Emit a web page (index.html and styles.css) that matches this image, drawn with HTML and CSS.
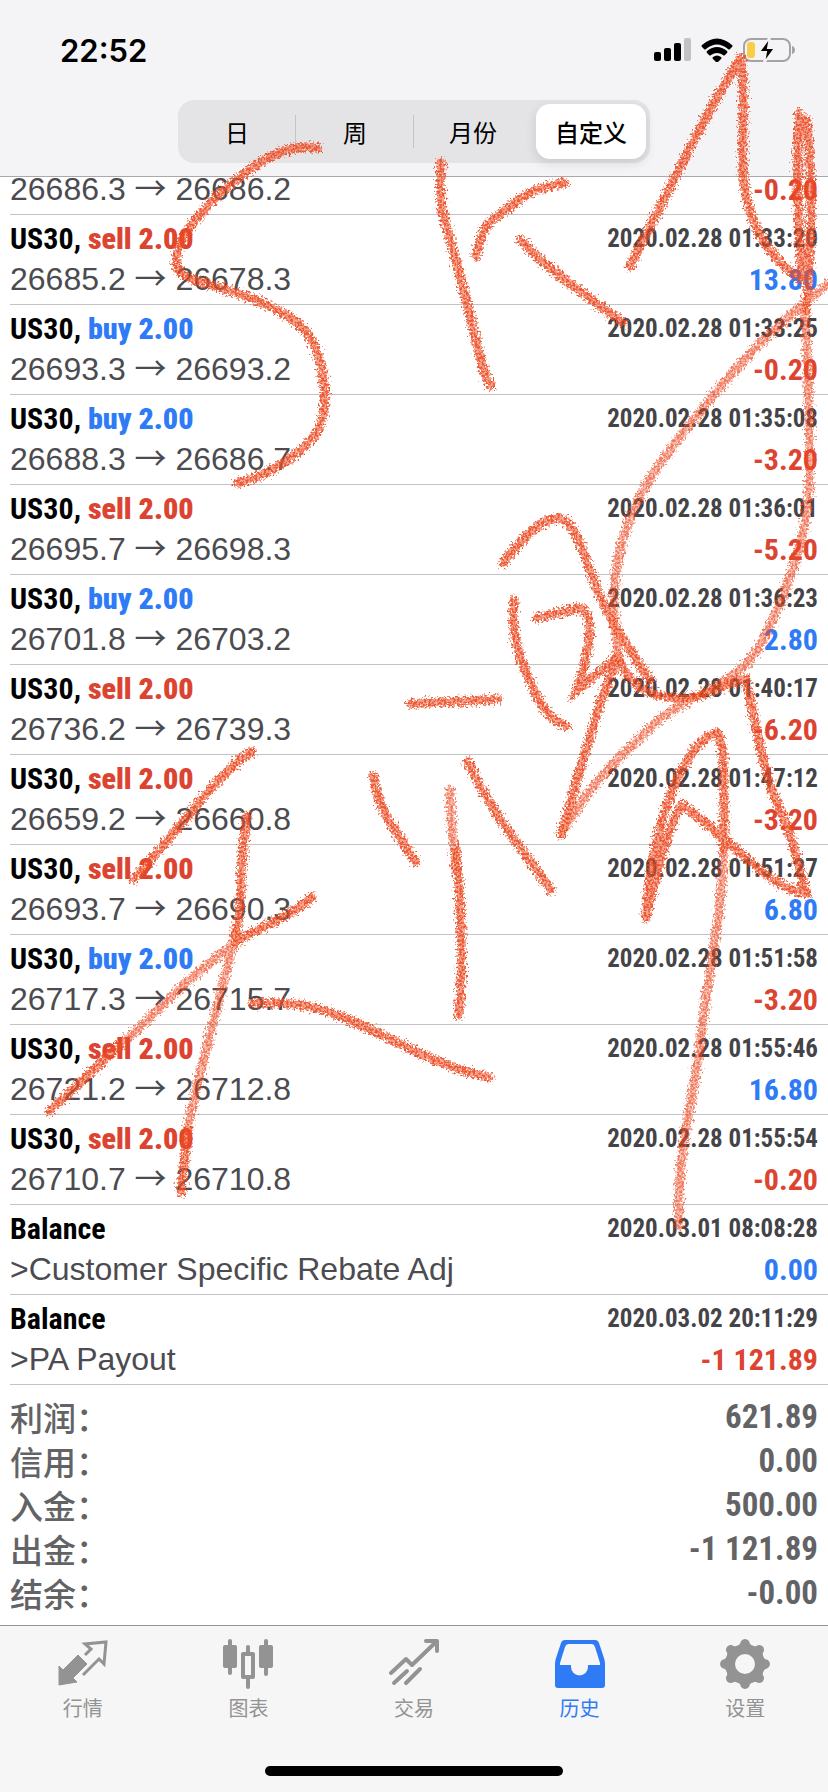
FILE: index.html
```html
<!DOCTYPE html>
<html lang="zh-CN">
  <head>
    <meta charset="utf-8" />
    <meta name="viewport" content="width=device-width, initial-scale=1" />
    <title>历史</title>
    <link rel="stylesheet" href="styles.css">
  </head>
  <body>
    <header class="top">
      <div class="status">
        <span class="clock">22:52</span>
        <div class="status-icons">
          <svg width="38" height="24" viewBox="0 0 38 24">
            <rect x="0" y="14" width="7" height="9" rx="2" />
            <rect x="10" y="10" width="7" height="13" rx="2" />
            <rect x="20" y="5" width="7" height="18" rx="2" />
            <rect x="30" y="0" width="7" height="23" rx="2" fill="#c2c2c4" />
          </svg>
          <svg width="32" height="24" viewBox="0 0 32 24">
            <path d="M1 7Q16-6 31 7q1 1 0 2l-2 2q-1 1-2 0Q16 2 5 11q-1 1-2 0L1 9q-1-1 0-2z" />
            <path d="M6 13q10-8 20 0q1 1 0 2l-2 2q-1 1-2 0-6-4-12 0-1 1-2 0l-2-2q-1-1 0-2z" />
            <path d="M12 19q4-3 8 0 1 1 0 2l-3 3q-1 1-2 0l-3-3q-1-1 0-2z" />
          </svg>
          <svg width="54" height="26" viewBox="0 0 54 26">
            <rect x="2" y="2" width="46" height="22" rx="7" fill="none" stroke="#a3a3a6" stroke-width="2" />
            <path d="M50 9c4 1 4 7 0 8z" fill="#a3a3a6" />
            <rect x="5" y="5" width="8" height="16" rx="3" fill="#f7ce46" />
            <path d="M28 0L17 15h7l-2 11 11-15h-7z" stroke="#f4f4f6" stroke-width="2" />
          </svg>
        </div>
      </div>
      <nav class="segments">
        <button type="button">日</button>
        <button type="button">周</button>
        <button type="button">月份</button>
        <button type="button" class="selected">自定义</button>
      </nav>
    </header>

    <main>
      <ul class="deals">
        <li class="deal clipped">
          <span class="price">26686.3 <i>→</i> 26686.2</span>
          <span class="profit loss">-0.20</span>
        </li>
        <li class="deal">
          <span class="symbol">US30, <b class="sell">sell 2.00</b></span>
          <time>2020.02.28 01:33:20</time>
          <span class="price">26685.2 <i>→</i> 26678.3</span>
          <span class="profit">13.80</span>
        </li>
        <li class="deal">
          <span class="symbol">US30, <b class="buy">buy 2.00</b></span>
          <time>2020.02.28 01:33:25</time>
          <span class="price">26693.3 <i>→</i> 26693.2</span>
          <span class="profit loss">-0.20</span>
        </li>
        <li class="deal">
          <span class="symbol">US30, <b class="buy">buy 2.00</b></span>
          <time>2020.02.28 01:35:08</time>
          <span class="price">26688.3 <i>→</i> 26686.7</span>
          <span class="profit loss">-3.20</span>
        </li>
        <li class="deal">
          <span class="symbol">US30, <b class="sell">sell 2.00</b></span>
          <time>2020.02.28 01:36:01</time>
          <span class="price">26695.7 <i>→</i> 26698.3</span>
          <span class="profit loss">-5.20</span>
        </li>
        <li class="deal">
          <span class="symbol">US30, <b class="buy">buy 2.00</b></span>
          <time>2020.02.28 01:36:23</time>
          <span class="price">26701.8 <i>→</i> 26703.2</span>
          <span class="profit">2.80</span>
        </li>
        <li class="deal">
          <span class="symbol">US30, <b class="sell">sell 2.00</b></span>
          <time>2020.02.28 01:40:17</time>
          <span class="price">26736.2 <i>→</i> 26739.3</span>
          <span class="profit loss">-6.20</span>
        </li>
        <li class="deal">
          <span class="symbol">US30, <b class="sell">sell 2.00</b></span>
          <time>2020.02.28 01:47:12</time>
          <span class="price">26659.2 <i>→</i> 26660.8</span>
          <span class="profit loss">-3.20</span>
        </li>
        <li class="deal">
          <span class="symbol">US30, <b class="sell">sell 2.00</b></span>
          <time>2020.02.28 01:51:27</time>
          <span class="price">26693.7 <i>→</i> 26690.3</span>
          <span class="profit">6.80</span>
        </li>
        <li class="deal">
          <span class="symbol">US30, <b class="buy">buy 2.00</b></span>
          <time>2020.02.28 01:51:58</time>
          <span class="price">26717.3 <i>→</i> 26715.7</span>
          <span class="profit loss">-3.20</span>
        </li>
        <li class="deal">
          <span class="symbol">US30, <b class="sell">sell 2.00</b></span>
          <time>2020.02.28 01:55:46</time>
          <span class="price">26721.2 <i>→</i> 26712.8</span>
          <span class="profit">16.80</span>
        </li>
        <li class="deal">
          <span class="symbol">US30, <b class="sell">sell 2.00</b></span>
          <time>2020.02.28 01:55:54</time>
          <span class="price">26710.7 <i>→</i> 26710.8</span>
          <span class="profit loss">-0.20</span>
        </li>
        <li class="deal">
          <span class="symbol">Balance</span>
          <time>2020.03.01 08:08:28</time>
          <span class="price">&gt;Customer Specific Rebate Adj</span>
          <span class="profit">0.00</span>
        </li>
        <li class="deal">
          <span class="symbol">Balance</span>
          <time>2020.03.02 20:11:29</time>
          <span class="price">&gt;PA Payout</span>
          <span class="profit loss">-1 121.89</span>
        </li>
      </ul>

      <dl class="summary">
        <div><dt>利润：</dt><dd>621.89</dd></div>
        <div><dt>信用：</dt><dd>0.00</dd></div>
        <div><dt>入金：</dt><dd>500.00</dd></div>
        <div><dt>出金：</dt><dd>-1 121.89</dd></div>
        <div><dt>结余：</dt><dd>-0.00</dd></div>
      </dl>
    </main>

    <footer class="bottom">
      <nav class="tabs">
        <a href="#quotes">
          <svg width="50" height="50" viewBox="0 0 50 50">
            <path d="M20 16l9 9-14 14 4 4-18 3V27l4 4z" fill="currentColor" stroke="currentColor" stroke-linejoin="round" />
            <path d="M27 16l6-6-6-5 21-2-2 22-5-5-16 16" fill="none" stroke="currentColor" stroke-width="3" />
          </svg>
          行情
        </a>
        <a href="#charts">
          <svg width="50" height="50" viewBox="0 0 50 50" fill="currentColor">
            <rect x="0" y="6" width="14" height="23" rx="2" />
            <rect x="36" y="6" width="14" height="23" rx="2" />
            <path d="M7 2v32M43 2v33M25 8v6M25 40v8" stroke="currentColor" stroke-width="4" stroke-linecap="round" />
            <rect x="20" y="15" width="10" height="23" fill="none" stroke="currentColor" stroke-width="4" stroke-linejoin="round" />
          </svg>
          图表
        </a>
        <a href="#trade">
          <svg width="50" height="50" viewBox="0 0 50 50" fill="none" stroke="currentColor" stroke-width="4" stroke-linecap="round" stroke-linejoin="round">
            <path d="M2 34l15-14 6 6L47 3M37 2h11v10" />
            <path d="M5 44l13-12M17 44l14-14" />
          </svg>
          交易
        </a>
        <a href="#history" class="active">
          <svg width="50" height="50" viewBox="0 0 50 50" fill="currentColor" fill-rule="evenodd">
            <path d="M10 1h30q3 0 4 3l5 15q1 3 1 6v21q0 3-3 3H3q-3 0-3-3V25q0-3 1-6L6 4q1-3 4-3zM14 5q-3 0-4 3L5 24v2h11v2a8 8 0 0 0 17 0v-2h12v-2L40 8q-1-3-3-3z" />
          </svg>
          历史
        </a>
        <a href="#settings">
          <svg width="50" height="50" viewBox="0 0 50 50" fill="currentColor">
            <circle cx="25" cy="25" r="15" fill="none" stroke="currentColor" stroke-width="10" />
            <path id="tooth" d="M15 9Q20 7 21 2q4-4 8 0 1 5 6 7l-6 4h-8z" />
            <use href="#tooth" transform="rotate(45 25 25)" />
            <use href="#tooth" transform="rotate(90 25 25)" />
            <use href="#tooth" transform="rotate(135 25 25)" />
            <use href="#tooth" transform="rotate(180 25 25)" />
            <use href="#tooth" transform="rotate(225 25 25)" />
            <use href="#tooth" transform="rotate(270 25 25)" />
            <use href="#tooth" transform="rotate(315 25 25)" />
          </svg>
          设置
        </a>
      </nav>
      <div class="home-bar"></div>
    </footer>

    <!-- crayon scribble over the page -->
    <svg class="scribble" viewBox="0 0 828 1792" aria-hidden="true">
      <defs>
        <filter id="crayon" filterUnits="userSpaceOnUse" x="0" y="0" width="828" height="1792">
          <feTurbulence type="fractalNoise" baseFrequency="0.45" numOctaves="2" seed="4" result="noise" />
          <feDisplacementMap in="SourceGraphic" in2="noise" scale="12" xChannelSelector="R" yChannelSelector="G" result="rough" />
          <feColorMatrix in="noise" type="matrix" values="0 0 0 0 0  0 0 0 0 0  0 0 0 0 0  0 0 6 0 -2.5" result="grain" />
          <feComposite in="rough" in2="grain" operator="in" result="speckled" />
          <feComponentTransfer in="rough" result="base">
            <feFuncA type="linear" slope="0.6" />
          </feComponentTransfer>
          <feMerge>
            <feMergeNode in="base" />
            <feMergeNode in="speckled" />
          </feMerge>
        </filter>
      </defs>
      <g filter="url(#crayon)">
        <g class="light">
          <path d="M828 284C770 330 740 362 700 412S612 515 614 610L618 660" />
          <path d="M805 305C806 350 812 440 809 490S785 600 760 645S690 690 650 728S590 785 561 834" />
          <path d="M724 845C722 920 708 970 702 1030S676 1150 679 1226" />
          <path d="M450 790C451 830 455 850 456 870" />
          <path d="M236 930C225 985 195 1080 186 1140" />
          <path d="M240 940C185 978 150 1020 115 1050" />
        </g>
        <g class="firm">
          <path d="M318 148C285 143 262 160 236 180S178 236 176 258S200 280 225 289S300 312 314 345S330 420 310 441S265 476 237 483" />
          <path d="M441 162C440 190 440 205 446 225S462 285 470 315S482 373 491 386" />
          <path d="M564 183C530 188 520 200 500 214S482 238 476 256" />
          <path d="M521 240C545 268 585 294 622 322" />
          <path d="M630 266C660 210 688 145 740 58" />
          <path d="M740 58C746 90 742 130 743 170S763 257 803 280" />
          <path d="M503 563C525 535 545 515 561 519S585 562 600 596S636 660 650 680" />
          <path d="M514 600C510 640 522 665 535 692S555 720 566 726" />
          <path d="M536 618C555 614 565 611 582 608C595 618 590 650 577 690L618 657C628 685 648 696 675 698S720 685 745 679C752 700 762 770 778 805S797 860 806 893C770 890 730 838 682 805C668 825 655 880 646 918" />
          <path d="M618 660C605 685 598 710 586 750S568 812 561 835" />
          <path d="M646 915C650 840 680 742 717 733C727 745 723 800 724 850" />
          <path d="M411 704C440 701 470 702 498 699" />
          <path d="M468 762C490 810 515 840 551 890" />
          <path d="M373 776C378 810 398 835 416 862" />
          <path d="M459 1015C464 960 461 910 456 850" />
          <path d="M251 752C215 776 190 817 134 879" />
          <path d="M247 816C240 850 243 900 236 935" />
          <path d="M253 1003C295 1002 310 1004 350 1020S430 1065 489 1077" />
          <path d="M312 897C285 920 265 924 235 943" />
          <path d="M120 1045L50 1111" />
          <path d="M188 1130L181 1192" />
          <path d="M799 113C797 160 797 215 802 278" />
          <path d="M806 120C813 170 812 235 806 310" />
        </g>
      </g>
    </svg>
  </body>
</html>
```
FILE: styles.css
```css
body {
  position: relative;
  display: flex;
  flex-direction: column;
  min-height: 100vh;
  margin: 0;
  background: #fff;
  color: #000;
  font-family: "Liberation Sans", "Noto Sans CJK SC", sans-serif;
}

.top {
  background: #f4f4f6;
  border-bottom: 1px solid #a9a9ab;
}

.status {
  display: flex;
  justify-content: space-between;
  align-items: center;
  height: 100px;
  padding: 0 32px 0 60px;
}

.clock {
  font: 600 31px "Inter", sans-serif;
}

.status-icons {
  display: flex;
  align-items: center;
  gap: 9px;
}

.segments {
  display: grid;
  grid-template-columns: repeat(4, 1fr);
  width: 57%;
  margin: 0 auto 13px;
  box-sizing: border-box;
  height: 63px;
  padding: 4px 0;
  border-radius: 16px;
  background: #e4e4e6;
}

.segments button {
  position: relative;
  padding: 0;
  border: none;
  border-radius: 14px;
  background: none;
  color: #000;
  font: 24px "Noto Sans CJK SC", sans-serif;
}

.segments button:nth-child(-n+2)::after {
  content: "";
  position: absolute;
  right: 0;
  top: 11px;
  bottom: 11px;
  width: 1px;
  background: #c4c4c7;
}

.segments .selected {
  margin: 0 4px;
  background: #fff;
  font-weight: 500;
  box-shadow: 0 4px 12px rgba(0, 0, 0, 0.12);
}

main {
  flex: 1;
}

.deals {
  list-style: none;
  margin: 0 0 0 10px;
  padding: 0;
}

.deal {
  display: grid;
  grid-template-columns: 1fr auto;
  grid-template-rows: 38px 44px;
  align-items: center;
  padding: 4px 10px 3px 0;
  border-bottom: 1px solid #c3c3c5;
  font-size: 32px;
}

/* row scrolled halfway under the header */
.clipped {
  grid-template-rows: 24px;
  padding: 0 10px 13px 0;
}

.symbol,
.deal time,
.profit,
.summary dd {
  font-family: "Roboto Condensed", "Liberation Sans Narrow", sans-serif;
  font-weight: bold;
}

.symbol,
.profit {
  font-size: 30px;
}

.price {
  color: #4b4b50;
}

.price i {
  font-family: "Noto Sans CJK SC", sans-serif;
  font-style: normal;
  line-height: 1px;
}

.deal time {
  color: #444448;
  font-size: 25px;
  text-align: right;
}

.profit {
  text-align: right;
}

.buy,
.profit {
  color: #2f7bf6;
}

.sell,
.loss {
  color: #dc4431;
}

.summary {
  margin: 0;
  padding: 10px;
  color: #636366;
  font-size: 33px;
  line-height: 44px;
}

.summary div {
  display: flex;
  justify-content: space-between;
  height: 44px;
}

.summary dt {
  font-family: "Noto Sans CJK SC", sans-serif;
  font-weight: 500;
}

.summary dd {
  margin: 0;
}

.bottom {
  background: #f6f6f7;
  border-top: 1px solid #939395;
}

.tabs {
  display: flex;
  padding-top: 13px;
}

.tabs a {
  flex: 1;
  display: flex;
  flex-direction: column;
  align-items: center;
  gap: 4px;
  color: #939393;
  font: 20px/30px "Noto Sans CJK SC", sans-serif;
  text-decoration: none;
}

.tabs .active {
  color: #2f7bf6;
}

.home-bar {
  width: 36%;
  height: 10px;
  margin: 43px auto 16px;
  border-radius: 5px;
  background: #000;
}

.scribble {
  position: absolute;
  top: 0;
  left: 0;
  width: 100%;
  pointer-events: none;
}

.scribble path {
  fill: none;
  stroke: #ee4e26;
  stroke-width: 9;
  stroke-linecap: round;
}

.firm {
  opacity: 0.85;
}

.light {
  opacity: 0.6;
}
```
